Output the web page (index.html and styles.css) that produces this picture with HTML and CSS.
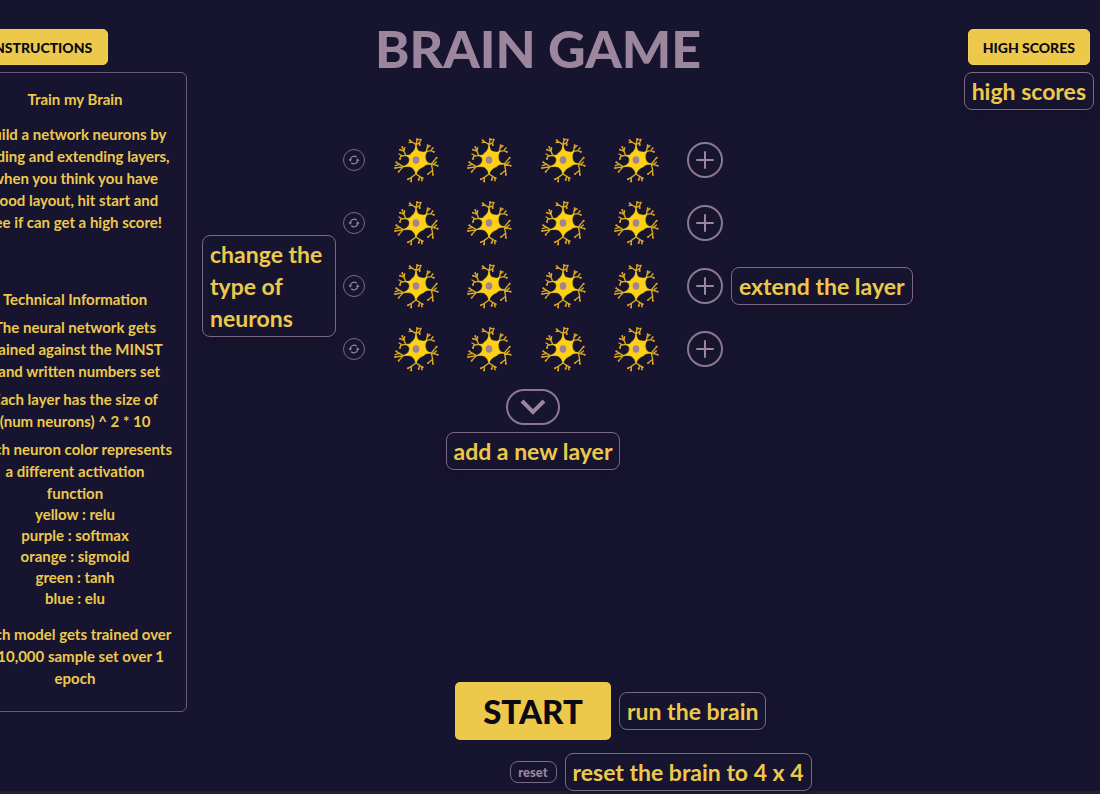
FILE: index.html
```html
<!DOCTYPE html>
<html lang="en">
<head>
<meta charset="utf-8">
<title>Brain Game</title>
<link rel="stylesheet" href="styles.css">
</head>
<body>
<svg class="defs" aria-hidden="true">
  <symbol id="neuron" viewBox="174 37 138 138">
    <g fill="none" stroke="#d6ad1e" stroke-width="4" stroke-linecap="round">
      <path d="M243 82V60L231 52L224 47M231 52L223 53M243 60L246 46M243 60L254 54L258 44M254 54V61M246 46L252 44"/>
      <path d="M264 91L274 80L278 62M276 72L284 63M274 80L288 78L297 82M288 78L293 70"/>
      <path d="M268 116L289 118L305 99M289 118L307 123M289 118L293 137L280 147M293 137V150M297 118L304 112"/>
      <path d="M243 132V148L229 158L219 164M229 158V171M243 148L254 155L263 161M254 155L251 166M259 158L261 168"/>
      <path d="M229 121L205 126L184 113M205 126L182 130M205 126L191 141M193 119L181 123"/>
      <path d="M227 96L212 92L202 68M207 80L196 75M212 92L197 95L195 103M203 94L192 88M207 80L209 69"/>
    </g>
    <path fill="#fcd116" stroke="#fcd116" stroke-width="1" d="M243 60Q246 77 254 80Q266 85 277 79Q269 91 272 102Q273 113 288 118Q272 119 266 126Q248 133 243 149Q239 134 229 128Q221 124 205 126Q223 119 223 106Q223 97 212 92Q226 93 229 85Q240 79 243 60Z"/>
    <g fill="#ed9b35">
      <circle cx="224" cy="47" r="3"/><circle cx="223" cy="54" r="2"/><circle cx="246" cy="43" r="3"/><circle cx="256" cy="45" r="3"/><circle cx="254" cy="61" r="3"/>
      <circle cx="278" cy="62" r="3"/><circle cx="285" cy="64" r="2"/><circle cx="296" cy="81" r="3"/><circle cx="294" cy="70" r="2"/>
      <circle cx="305" cy="99" r="3"/><circle cx="308" cy="123" r="3"/><circle cx="279" cy="148" r="3"/><circle cx="294" cy="150" r="3"/>
      <circle cx="219" cy="164" r="3"/><circle cx="228" cy="170" r="3"/><circle cx="251" cy="165" r="3"/><circle cx="263" cy="161" r="3"/><circle cx="261" cy="168" r="2"/>
      <circle cx="184" cy="113" r="3"/><circle cx="180" cy="130" r="3"/><circle cx="191" cy="141" r="3"/>
      <circle cx="202" cy="67" r="3"/><circle cx="195" cy="75" r="3"/><circle cx="195" cy="102" r="3"/>
    </g>
    <ellipse cx="243" cy="106" rx="10" ry="11" fill="#a3838f"/>
  </symbol>
  <symbol id="swap" viewBox="0 0 22 22">
    <g fill="none" stroke="currentColor" stroke-width="1.3">
      <path d="M6.9 10.8A4.2 4.2 0 0 1 14 8M15.1 11.2A4.2 4.2 0 0 1 8 14"/>
    </g>
    <path fill="currentColor" d="M4.9 10.2H8.9L6.9 12.8ZM13.1 11.8H17.1L15.1 9.2Z"/>
  </symbol>
  <symbol id="plus" viewBox="0 0 32 32">
    <path fill="none" stroke="currentColor" stroke-width="2" stroke-linecap="round" d="M16 8V24M8 16H24"/>
  </symbol>
</svg>

<div class="page">
  <aside class="side">
    <button class="btn instructions-btn" type="button">INSTRUCTIONS</button>
    <section class="panel">
      <p class="lead">Train my Brain</p>
      <p class="intro">Build a network neurons by<br>adding and extending layers,<br>when you think you have<br>good layout, hit start and<br>see if can get a high score!</p>
      <p>Technical Information</p>
      <p>The neural network gets<br>trained against the MINST<br>hand written numbers set</p>
      <p>Each layer has the size of<br>(num neurons) ^ 2 * 10</p>
      <p class="flush">Each neuron color represents<br>a different activation<br>function</p>
      <ul class="colors">
        <li>yellow : relu</li>
        <li>purple : softmax</li>
        <li>orange : sigmoid</li>
        <li>green : tanh</li>
        <li>blue : elu</li>
      </ul>
      <p>Each model gets trained over<br>a 10,000 sample set over 1<br>epoch</p>
    </section>
  </aside>

  <main class="game">
    <h1>BRAIN GAME</h1>
    <div class="layers">
      <div class="layer">
        <button class="round swap" type="button" aria-label="Change neuron type"><svg><use href="#swap"/></svg></button>
        <svg class="neuron"><use href="#neuron"/></svg><svg class="neuron"><use href="#neuron"/></svg><svg class="neuron"><use href="#neuron"/></svg><svg class="neuron"><use href="#neuron"/></svg>
        <button class="round add" type="button" aria-label="Extend layer"><svg><use href="#plus"/></svg></button>
      </div>
      <div class="layer">
        <button class="round swap" type="button" aria-label="Change neuron type"><svg><use href="#swap"/></svg></button>
        <svg class="neuron"><use href="#neuron"/></svg><svg class="neuron"><use href="#neuron"/></svg><svg class="neuron"><use href="#neuron"/></svg><svg class="neuron"><use href="#neuron"/></svg>
        <button class="round add" type="button" aria-label="Extend layer"><svg><use href="#plus"/></svg></button>
      </div>
      <div class="layer">
        <span class="tip tip-left">change the<br>type of<br>neurons</span>
        <button class="round swap" type="button" aria-label="Change neuron type"><svg><use href="#swap"/></svg></button>
        <svg class="neuron"><use href="#neuron"/></svg><svg class="neuron"><use href="#neuron"/></svg><svg class="neuron"><use href="#neuron"/></svg><svg class="neuron"><use href="#neuron"/></svg>
        <button class="round add" type="button" aria-label="Extend layer"><svg><use href="#plus"/></svg></button>
        <span class="tip tip-right">extend the layer</span>
      </div>
      <div class="layer">
        <button class="round swap" type="button" aria-label="Change neuron type"><svg><use href="#swap"/></svg></button>
        <svg class="neuron"><use href="#neuron"/></svg><svg class="neuron"><use href="#neuron"/></svg><svg class="neuron"><use href="#neuron"/></svg><svg class="neuron"><use href="#neuron"/></svg>
        <button class="round add" type="button" aria-label="Extend layer"><svg><use href="#plus"/></svg></button>
      </div>
    </div>
    <button class="new-layer" type="button" aria-label="Add a new layer">
      <svg viewBox="0 0 26 16"><path d="M2 2L13 13L24 2" fill="none" stroke="currentColor" stroke-width="4"/></svg>
    </button>
    <span class="tip">add a new layer</span>

    <div class="actions">
      <div class="anchor">
        <button class="start" type="button">START</button>
        <span class="tip tip-right">run the brain</span>
      </div>
      <div class="anchor">
        <button class="reset" type="button">reset</button>
        <span class="tip tip-right">reset the brain to 4 x 4</span>
      </div>
    </div>
  </main>

  <aside class="side scores">
    <div class="scores-box">
      <button class="btn" type="button">HIGH SCORES</button>
      <span class="tip">high scores</span>
    </div>
  </aside>
</div>
</body>
</html>
```

FILE: styles.css
```css
* {
  box-sizing: border-box;
}

body {
  margin: 0;
  overflow: hidden;
  background: #17142f;
  color: #edc94b;
  font-family: Lato, "Open Sans", sans-serif;
}

button {
  padding: 0;
  font-family: inherit;
  cursor: pointer;
}

.defs {
  position: absolute;
  width: 0;
  height: 0;
}

.page {
  display: grid;
  grid-template-columns: 224px 1fr 224px;
  min-height: 100vh;
  margin: 0 -3px 0 -37px;
  border-bottom: 3px solid #22212c;
}

.side {
  padding-top: 29px;
}

.btn {
  height: 36px;
  padding: 0 14px;
  border: 1px solid #f0cf57;
  border-radius: 5px;
  background: #edc94b;
  color: #0b0a14;
  font-size: 14px;
  font-weight: 900;
  white-space: nowrap;
}

.instructions-btn {
  display: block;
  width: 134px;
  margin-left: 11px;
}

.panel {
  margin-top: 7px;
  padding: 15px 0 16px;
  border: 1px solid #6b5a76;
  border-radius: 6px;
  font-size: 15px;
  font-weight: 700;
  line-height: 22px;
  text-align: center;
  white-space: nowrap;
}

.panel p {
  margin: 0 0 6px;
}

.panel .lead {
  margin-bottom: 13px;
}

.panel .intro {
  margin-bottom: 55px;
}

.panel .flush {
  margin: 0;
}

.colors {
  margin: 0 0 14px;
  padding: 0;
  line-height: 21px;
  list-style: none;
}

.game {
  display: flex;
  flex-direction: column;
  align-items: center;
}

h1 {
  margin: 18px 0 0;
  padding-left: 10px;
  color: #9c869e;
  font-size: 52px;
  font-weight: 900;
  line-height: 60px;
  white-space: nowrap;
}

.layers {
  width: 380px;
  margin-top: 50px;
}

.layer {
  position: relative;
  display: flex;
  align-items: center;
  justify-content: space-between;
  height: 63px;
}

.neuron {
  width: 46px;
  height: 46px;
}

.round {
  display: grid;
  border: 1px solid #7b6984;
  border-radius: 50%;
  background: transparent;
  color: #9c869e;
}

.round svg {
  width: 100%;
  height: 100%;
}

.swap {
  width: 22px;
  height: 22px;
}

.add {
  width: 36px;
  height: 36px;
  border: 2px solid #8b7790;
}

.new-layer {
  display: grid;
  place-items: center;
  width: 54px;
  height: 36px;
  margin: 9px 0 7px;
  border: 2px solid #8b7790;
  border-radius: 18px;
  background: transparent;
  color: #9c869e;
}

.new-layer svg {
  width: 26px;
  height: 16px;
}

.tip {
  padding: 2px 7px;
  border: 1px solid #7b6984;
  border-radius: 8px;
  box-shadow: 0 4px 8px #12102699;
  font-size: 23px;
  font-weight: 700;
  line-height: 32px;
  white-space: nowrap;
}

.tip-left,
.tip-right {
  position: absolute;
  top: 50%;
  transform: translateY(-50%);
}

.tip-left {
  right: 100%;
  width: 134px;
  margin-right: 7px;
}

.tip-right {
  left: 100%;
  margin-left: 8px;
}

.actions {
  display: flex;
  flex-direction: column;
  align-items: center;
  gap: 21px;
  margin-top: auto;
  padding-bottom: 8px;
}

.anchor {
  position: relative;
  display: flex;
}

.start {
  width: 156px;
  height: 58px;
  border: 0;
  border-radius: 5px;
  background: #edc94b;
  color: #0b0a14;
  font-size: 33px;
  font-weight: 900;
}

.reset {
  width: 47px;
  height: 22px;
  border: 1px solid #7b6984;
  border-radius: 8px;
  background: transparent;
  color: #9c869e;
  font-size: 13px;
  font-weight: 900;
}

.scores {
  display: flex;
  justify-content: flex-end;
  padding-right: 9px;
}

.scores-box {
  display: flex;
  flex-direction: column;
  align-items: center;
  gap: 7px;
}
```
